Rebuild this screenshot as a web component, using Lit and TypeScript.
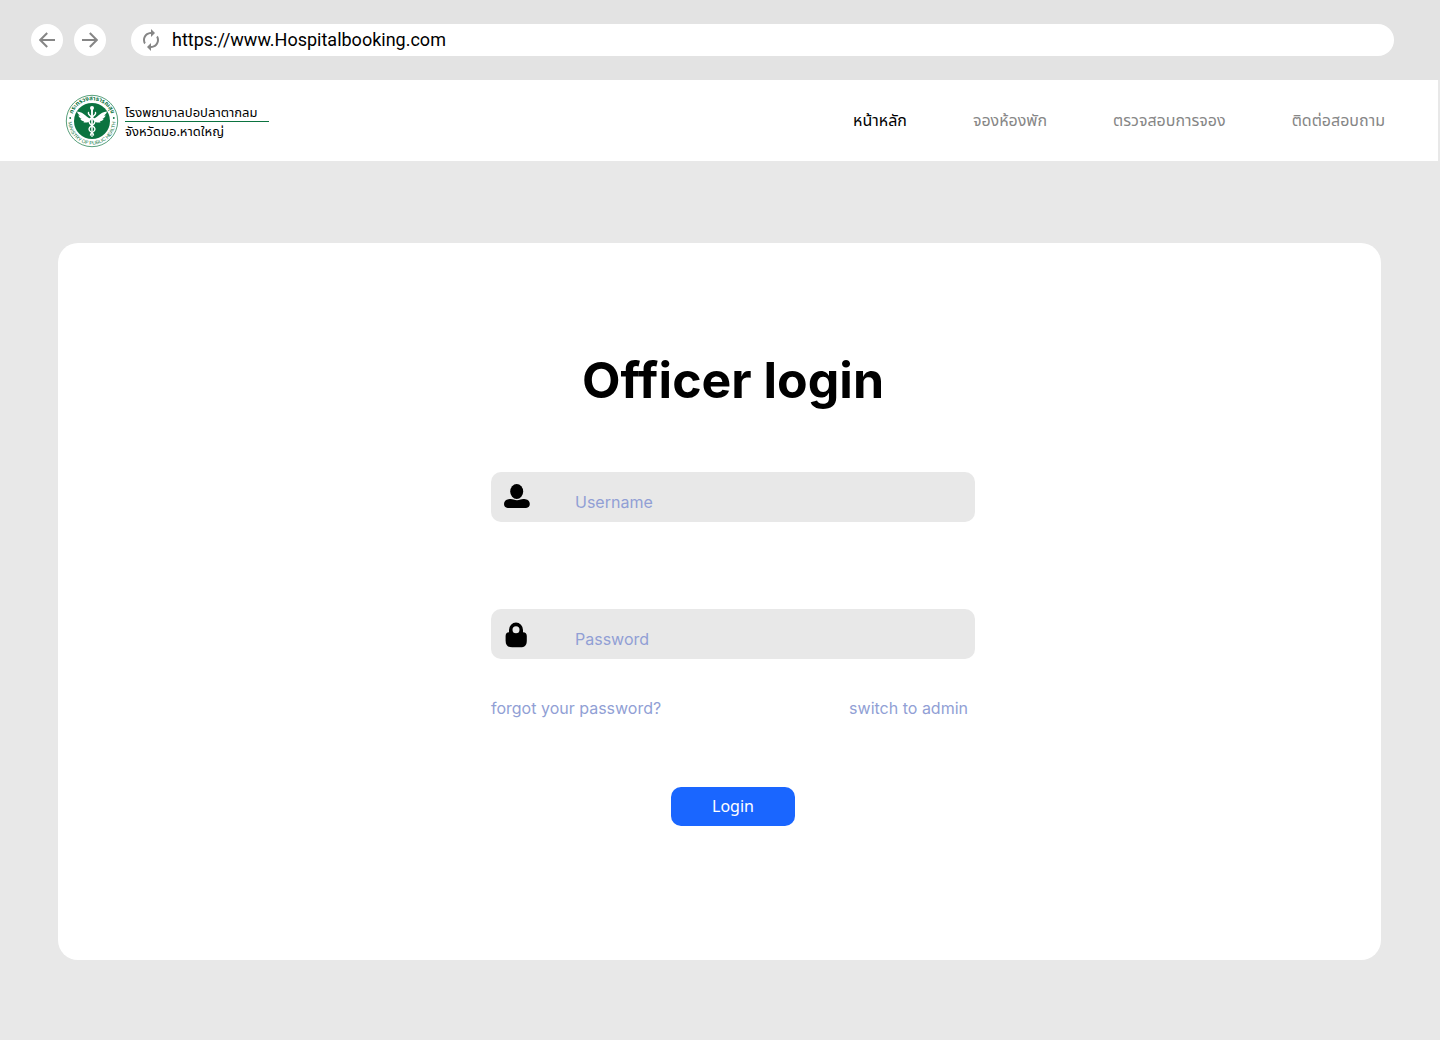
import { LitElement, html, css, svg } from "lit";
import { customElement, property, state } from "lit/decorators.js";
import { classMap } from "lit/directives/class-map.js";

const arrow = svg`<path d="M16 8H1.2M8.200 1 1.200 8 8.200 15" fill="none" stroke="#868686" stroke-width="2"/>`;

@customElement("browser-bar")
export class BrowserBar extends LitElement {
  @property() url = "";

  static styles = css`
    :host {
      display: flex;
      align-items: center;
      height: 80px;
      padding: 0 46px 0 31px;
      box-sizing: border-box;
      background: #e3e3e3;
    }
    .round {
      display: grid;
      place-items: center;
      width: 32px;
      height: 32px;
      margin-right: 11px;
      padding: 0;
      border: 0;
      border-radius: 50%;
      background: #fff;
    }
    .flip {
      transform: scaleX(-1);
    }
    .address {
      display: flex;
      flex: 1;
      align-items: center;
      height: 32px;
      margin-left: 14px;
      border-radius: 16px;
      background: #fff;
    }
    .reload {
      display: grid;
      place-items: center;
      width: 40px;
      height: 32px;
      padding: 0;
      border: 0;
      background: none;
    }
    .url {
      flex: 1;
      min-width: 0;
      margin: 0 16px 0 1px;
      padding: 0;
      border: 0;
      outline: 0;
      background: none;
      color: #000;
      font: 400 18px/24px Roboto, sans-serif;
    }
  `;

  render() {
    return html`
      <button class="round" aria-label="Back">
        <svg width="16" height="16" viewBox="0 0 16 16">${arrow}</svg>
      </button>
      <button class="round" aria-label="Forward">
        <svg class="flip" width="16" height="16" viewBox="0 0 16 16">${arrow}</svg>
      </button>
      <div class="address">
        <button class="reload" aria-label="Reload">
          <svg width="24" height="24" viewBox="0 0 24 24" fill="#868686">
            <path
              d="M12 6v3l4-4-4-4v3c-4.420 0-8 3.580-8 8 0 1.570.46 3.030 1.240 4.260L6.700 14.800A5.870 5.870 0 0 1 6 12c0-3.310 2.690-6 6-6zm6.760 1.740L17.300 9.200c.44.84.7 1.790.7 2.800 0 3.310-2.690 6-6 6v-3l-4 4 4 4v-3c4.420 0 8-3.580 8-8 0-1.570-.46-3.030-1.240-4.260z"
            />
          </svg>
        </button>
        <input class="url" aria-label="Address" .value=${this.url} />
      </div>
    `;
  }
}

@customElement("ministry-seal")
export class MinistrySeal extends LitElement {
  static styles = css`
    :host {
      display: block;
    }
    .seal {
      display: block;
      overflow: visible;
    }
    .ring {
      fill: #0b7340;
      font-weight: 700;
      font-family: "Liberation Sans", "Noto Sans Thai", sans-serif;
    }
    .thai {
      font-size: 6px;
    }
    .latin {
      font-size: 5px;
      font-weight: 400;
    }
  `;

  render() {
    return html`
      <svg class="seal" width="54" height="54" viewBox="0 0 54 54" role="img" aria-label="Ministry of Public Health">
        <defs>
          <path id="top" d="M7.200 33A20.700 20.700 0 1 1 46.800 33" />
          <path id="bottom" d="M3.600 24A23.600 23.600 0 1 0 50.400 24" />
        </defs>
        <circle cx="27" cy="27" r="25.700" fill="#fff" stroke="#2d8659" stroke-width=".8" />
        <circle cx="27" cy="27" r="18" fill="#0b7340" />
        <text class="ring thai" text-anchor="middle">
          <textPath href="#top" startOffset="50%">กระทรวงสาธารณสุข</textPath>
        </text>
        <text class="ring latin" text-anchor="middle">
          <textPath href="#bottom" startOffset="50%">MINISTRY OF PUBLIC HEALTH</textPath>
        </text>
        <circle cx="5.200" cy="24" r=".9" fill="#0b7340" />
        <circle cx="48.800" cy="24" r=".9" fill="#0b7340" />
        <g fill="#fff">
          <circle cx="27" cy="14" r="2" />
          <path d="M26 15h2l-.4 28h-1.200Z" />
          <path
            d="M25.800 24.500C22 24.500 19.500 18 12 17.500c.5 2.300 1.900 3.400 3.300 3.900-.9.200-1.500.1-2 0 .8 2.100 2.100 3 3.600 3.200-.6.300-1.100.4-1.600.4 1.100 1.700 2.500 2.300 4 2.200-.3.400-.7.600-1.200.8 2.400 1.200 6 .4 7.700-2Z"
          />
          <path
            d="M28.200 24.500C32 24.500 34.500 18 42 17.500c-.5 2.300-1.900 3.400-3.300 3.900.9.200 1.500.1 2 0-.8 2.100-2.100 3-3.600 3.200.6.300 1.100.4 1.600.4-1.100 1.700-2.500 2.300-4 2.200.3.400.7.600 1.200.8-2.400 1.200-6 .4-7.700-2Z"
          />
        </g>
        <g fill="none" stroke="#fff" stroke-width="1.400" stroke-linecap="round">
          <path d="M23.500 18.500c-1.500 3 6.500 5 6.500 9s-6 4-6 7.500 4.500 3 4.500 6" />
          <path d="M30.500 18.500c1.500 3-6.500 5-6.500 9s6 4 6 7.500-4.500 3-4.500 6" />
        </g>
      </svg>
    `;
  }
}

@customElement("site-header")
export class SiteHeader extends LitElement {
  @state() private current = 0;

  private items = ["หน้าหลัก", "จองห้องพัก", "ตรวจสอบการจอง", "ติดต่อสอบถาม"];

  static styles = css`
    :host {
      display: flex;
      align-items: center;
      justify-content: space-between;
      height: 81px;
      margin-right: 2px;
      padding: 0 53px 0 65px;
      box-sizing: border-box;
      background: #fff;
      font-family: "Noto Sans", "Noto Sans Thai", sans-serif;
    }
    .brand {
      display: flex;
      align-items: center;
      gap: 6px;
      color: #000;
      text-decoration: none;
    }
    .names {
      display: block;
      width: 144px;
      padding-top: 2px;
      font-size: 13px;
      line-height: 18px;
      white-space: nowrap;
    }
    .name {
      display: block;
    }
    .first {
      border-bottom: 1px solid #0b7340;
    }
    .menu {
      display: flex;
      gap: 66px;
      padding-bottom: 2px;
    }
    .link {
      color: #868686;
      font-size: 16px;
      line-height: 24px;
      text-decoration: none;
      white-space: nowrap;
    }
    .active {
      color: #000;
    }
  `;

  render() {
    return html`
      <a class="brand" href="#">
        <ministry-seal></ministry-seal>
        <span class="names">
          <span class="name first">โรงพยาบาลปอปลาตากลม</span>
          <span class="name">จังหวัดมอ.หาดใหญ่</span>
        </span>
      </a>
      <nav class="menu">
        ${this.items.map(
          (item, i) => html`<a
            class=${classMap({ link: true, active: i === this.current })}
            href="#"
            @click=${() => (this.current = i)}
            >${item}</a
          >`
        )}
      </nav>
    `;
  }
}

@customElement("login-card")
export class LoginCard extends LitElement {
  static styles = css`
    :host {
      display: flex;
      justify-content: center;
      padding: 105px 0 134px 27px;
      border-radius: 20px;
      background: #fff;
      font-family: Inter, sans-serif;
    }
    .form {
      display: flex;
      flex-direction: column;
      width: 484px;
    }
    .title {
      margin: 0 0 60px;
      color: #000;
      font-size: 50px;
      font-weight: 700;
      font-variant-ligatures: none;
      line-height: 64px;
      text-align: center;
    }
    .field {
      display: flex;
      align-items: center;
      height: 50px;
      border-radius: 10px;
      background: #e8e8e8;
    }
    .field + .field {
      margin-top: 87px;
    }
    .icon {
      display: grid;
      place-items: center;
      width: 52px;
      height: 50px;
      margin-right: 32px;
    }
    .input {
      flex: 1;
      min-width: 0;
      height: 50px;
      padding: 10px 16px 0 0;
      box-sizing: border-box;
      border: 0;
      outline: 0;
      background: none;
      color: #919fd5;
      font: 400 16px/20px Inter, sans-serif;
    }
    .input::placeholder {
      color: #919fd5;
      opacity: 1;
    }
    .links {
      display: flex;
      justify-content: space-between;
      margin-top: 38px;
      padding-right: 7px;
    }
    .link {
      color: #919fd5;
      font-size: 16px;
      line-height: 22px;
      text-decoration: none;
    }
    .submit {
      align-self: center;
      width: 124px;
      height: 39px;
      margin-top: 68px;
      padding: 0 0 2px;
      border: 0;
      border-radius: 10px;
      background: #1a66ff;
      color: #fff;
      font: 400 16px/22px "Noto Sans", sans-serif;
    }
  `;

  render() {
    return html`
      <form class="form" @submit=${(e: Event) => e.preventDefault()}>
        <h1 class="title">Officer login</h1>
        <div class="field">
          <label class="icon" for="username" aria-label="Username">
            <svg width="26" height="26" viewBox="0 1 26 26">
              <ellipse cx="12.700" cy="8.500" rx="6.500" ry="7.500" />
              <path
                d="M4.500 16.200c2.200-.4 3.600-.3 5 .3 2.300 1 4.700 1 7 0 1.400-.6 2.800-.7 5-.3 2.700.4 4.300 2.200 4.300 4.900 0 2.300-1.300 3.900-3.700 3.900H3.700C1.300 25 0 23.400 0 21.100c0-2.700 1.800-4.500 4.500-4.900Z"
              />
            </svg>
          </label>
          <input class="input" id="username" type="text" placeholder="Username" />
        </div>
        <div class="field">
          <label class="icon" for="password" aria-label="Password">
            <svg width="24" height="28" viewBox="0 -2 24 28">
              <path
                fill-rule="evenodd"
                d="M4 10.200V8A7 7.500 0 0 1 18 8V10.200C20.600 10.500 21.800 11.500 21.800 14V18.500C21.800 23.500 19.800 25.300 15.300 25.300H7.300C2.800 25.300.6 23.500.6 18.500V14C.6 11.500 1.800 10.500 4 10.200ZM11 4.200A3.500 3.500 0 1 0 11 11.200A3.500 3.500 0 1 0 11 4.200Z"
              />
            </svg>
          </label>
          <input class="input" id="password" type="password" placeholder="Password" />
        </div>
        <div class="links">
          <a class="link" href="#">forgot your password?</a>
          <a class="link" href="#">switch to admin</a>
        </div>
        <button class="submit" type="submit">Login</button>
      </form>
    `;
  }
}

@customElement("app-root")
export class AppRoot extends LitElement {
  static styles = css`
    :host {
      display: block;
      min-height: 100vh;
      background: #e8e8e8;
    }
    .main {
      padding: 82px 59px 80px 58px;
    }
  `;

  render() {
    return html`
      <browser-bar url="https://www.Hospitalbooking.com"></browser-bar>
      <site-header></site-header>
      <main class="main"><login-card></login-card></main>
    `;
  }
}
